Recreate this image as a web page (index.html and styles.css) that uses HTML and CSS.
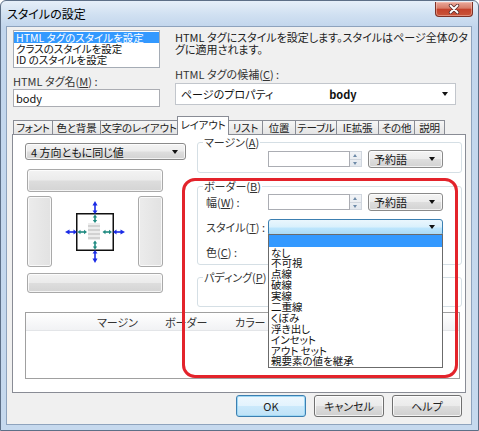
FILE: index.html
```html
<!DOCTYPE html>
<html lang="ja">
<head>
<meta charset="utf-8">
<title>スタイルの設定</title>
<link rel="stylesheet" href="styles.css">
</head>
<body>
<div class="window">
  <div class="titlebar">
    <span class="title">スタイルの設定</span>
    <div class="close">
      <svg width="12" height="10" viewBox="0 0 12 10"><path d="M2.5 1.5 L9.5 8.5 M9.5 1.5 L2.5 8.5" stroke="#5a3030" stroke-width="3.4" stroke-linecap="round"/><path d="M2.5 1.5 L9.5 8.5 M9.5 1.5 L2.5 8.5" stroke="#fff" stroke-width="1.8" stroke-linecap="round"/></svg>
    </div>
  </div>

  <div class="client">
    <div class="top">
      <div class="top-left">
        <div class="listbox">
          <div class="item selected">HTML タグのスタイルを設定</div>
          <div class="item">クラスのスタイルを設定</div>
          <div class="item">ID のスタイルを設定</div>
        </div>
        <div class="label tagname-label">HTML タグ名(<u>M</u>) :</div>
        <div class="textbox tagname-box">body</div>
      </div>
      <div class="top-right">
        <p class="desc">HTML タグにスタイルを設定します。スタイルはページ全体のタ<br>グに適用されます。</p>
        <div class="label cand-label">HTML タグの候補(<u>C</u>) :</div>
        <div class="combo combo-white cand-combo">
          <span class="combo-text">ページのプロパティ</span>
          <b class="combo-bold">body</b>
          <span class="arrow"></span>
        </div>
      </div>
    </div>

    <div class="tabs">
      <div class="tab t-font">フォント</div>
      <div class="tab t-color">色と背景</div>
      <div class="tab t-text">文字のレイアウト</div>
      <div class="tab t-layout active">レイアウト</div>
      <div class="tab t-list">リスト</div>
      <div class="tab t-pos">位置</div>
      <div class="tab t-table">テーブル</div>
      <div class="tab t-ie">IE拡張</div>
      <div class="tab t-other">その他</div>
      <div class="tab t-desc">説明</div>
    </div>

    <div class="panel">
      <div class="panel-grid">
        <div class="left-col">
          <div class="combo combo-btn side-combo">
            <span class="combo-text">4 方向ともに同じ値</span>
            <span class="arrow"></span>
          </div>
          <div class="box-editor">
            <div class="bar bar-top"></div>
            <div class="bar bar-left"></div>
            <div class="diagram">
              <svg width="86" height="71" viewBox="0 0 86 71">
                <rect x="36" y="27" width="12" height="17" fill="#ededed"/>
                <g fill="#d2d2d2">
                  <rect x="36" y="29" width="12" height="2"/>
                  <rect x="36" y="33" width="12" height="2"/>
                  <rect x="36" y="37" width="12" height="2"/>
                  <rect x="36" y="41" width="12" height="2"/>
                </g>
                <rect x="24.75" y="17.75" width="36.5" height="36.5" fill="none" stroke="#111" stroke-width="1.5"/>
                <g stroke="#1a2be6" stroke-width="1.6" fill="#1a2be6">
                  <line x1="43" y1="8" x2="43" y2="16"/>
                  <polygon points="40.5,9.5 43,5 45.5,9.5" stroke="none"/>
                  <polygon points="40.5,14.5 43,18 45.5,14.5" stroke="none"/>
                  <line x1="43" y1="56" x2="43" y2="64"/>
                  <polygon points="40.5,57.5 43,54 45.5,57.5" stroke="none"/>
                  <polygon points="40.5,62.5 43,67 45.5,62.5" stroke="none"/>
                  <line x1="16" y1="36" x2="23" y2="36"/>
                  <polygon points="17.5,33.5 13,36 17.5,38.5" stroke="none"/>
                  <polygon points="21.5,33.5 25,36 21.5,38.5" stroke="none"/>
                  <line x1="63" y1="36" x2="70" y2="36"/>
                  <polygon points="64.5,33.5 61,36 64.5,38.5" stroke="none"/>
                  <polygon points="68.5,33.5 73,36 68.5,38.5" stroke="none"/>
                </g>
                <g stroke="#1f8a80" stroke-width="1.6" fill="#1f8a80">
                  <line x1="43" y1="20" x2="43" y2="25"/>
                  <polygon points="40.8,21.5 43,18.5 45.2,21.5" stroke="none"/>
                  <polygon points="40.8,24 43,27 45.2,24" stroke="none"/>
                  <line x1="43" y1="46" x2="43" y2="52"/>
                  <polygon points="40.8,47.5 43,44.5 45.2,47.5" stroke="none"/>
                  <polygon points="40.8,50.5 43,53.5 45.2,50.5" stroke="none"/>
                  <line x1="27" y1="36" x2="33" y2="36"/>
                  <polygon points="28.5,33.8 25.5,36 28.5,38.2" stroke="none"/>
                  <polygon points="32,33.8 35,36 32,38.2" stroke="none"/>
                  <line x1="52" y1="36" x2="58" y2="36"/>
                  <polygon points="53.5,33.8 50.5,36 53.5,38.2" stroke="none"/>
                  <polygon points="57,33.8 60,36 57,38.2" stroke="none"/>
                </g>
              </svg>
            </div>
            <div class="bar bar-right"></div>
            <div class="bar bar-bottom"></div>
          </div>
        </div>

        <div class="right-col">
          <fieldset class="group group-margin">
            <legend>マージン(<u>A</u>)</legend>
            <div class="row">
              <span class="row-label"></span>
              <div class="spin-field">
                <div class="textbox num-box"></div>
                <div class="spin"><span class="spin-up"></span><span class="spin-down"></span></div>
              </div>
              <div class="combo combo-btn kw-combo"><span class="combo-text">予約語</span><span class="arrow"></span></div>
            </div>
          </fieldset>

          <fieldset class="group group-border">
            <legend>ボーダー(<u>B</u>)</legend>
            <div class="row">
              <span class="row-label">幅(<u>W</u>) :</span>
              <div class="spin-field">
                <div class="textbox num-box"></div>
                <div class="spin"><span class="spin-up"></span><span class="spin-down"></span></div>
              </div>
              <div class="combo combo-btn kw-combo"><span class="combo-text">予約語</span><span class="arrow"></span></div>
            </div>
            <div class="row">
              <span class="row-label">スタイル(<u>T</u>) :</span>
              <div class="style-wrap">
                <div class="combo combo-focus style-combo"><span class="combo-text"></span><span class="arrow"></span></div>
                <ul class="droplist">
                  <li class="hl">&nbsp;</li>
                  <li>なし</li>
                  <li>不可視</li>
                  <li>点線</li>
                  <li>破線</li>
                  <li>実線</li>
                  <li>二重線</li>
                  <li>くぼみ</li>
                  <li>浮き出し</li>
                  <li>インセット</li>
                  <li>アウト セット</li>
                  <li>親要素の値を継承</li>
                </ul>
              </div>
            </div>
            <div class="row">
              <span class="row-label">色(<u>C</u>) :</span>
            </div>
          </fieldset>

          <fieldset class="group group-padding">
            <legend>パディング(<u>P</u>)</legend>
          </fieldset>
        </div>
      </div>

      <div class="listview">
        <div class="lv-header">
          <span class="lv-col lv-c0"></span>
          <span class="lv-col lv-c1">マージン</span>
          <span class="lv-col lv-c2">ボーダー</span>
          <span class="lv-col lv-c3">カラー</span>
        </div>
      </div>

      <div class="highlight"></div>
    </div>

    <div class="buttons">
      <div class="btn btn-default">OK</div>
      <div class="btn btn-cancel">キャンセル</div>
      <div class="btn btn-help">ヘルプ</div>
    </div>
  </div>
</div>
</body>
</html>
```

FILE: styles.css
```css
* { box-sizing: border-box; }

html, body {
  margin: 0;
  padding: 0;
}

body {
  width: 479px;
  height: 431px;
  overflow: hidden;
  background: #fff;
  font-family: "Noto Sans CJK JP", "Noto Sans", sans-serif;
  font-size: 11px;
  line-height: 12px;
  font-feature-settings: "palt" 1;
  color: #111;
}

u { text-decoration: underline; text-underline-offset: 1px; }

/* ---------- window frame ---------- */
.window {
  width: 479px;
  height: 431px;
  display: flex;
  flex-direction: column;
  border: 1px solid #5d6f87;
  border-radius: 6px 6px 0 0;
  background: linear-gradient(#e6eff9 0, #d0e0f1 14px, #c2d6ed 26px, #c6d9ee 100%);
}

.titlebar {
  height: 25px;
  flex: none;
  display: flex;
  justify-content: space-between;
  align-items: flex-start;
  padding: 0 5px 0 6px;
}

.title {
  font-size: 12px;
  line-height: 12px;
  margin-top: 7px;
  color: #000;
}

.close {
  width: 38px;
  height: 15px;
  margin-top: 1px;
  display: flex;
  align-items: center;
  justify-content: center;
  border: 1px solid #7d3126;
  border-top: none;
  border-radius: 0 0 4px 4px;
  background: linear-gradient(#e9a99b 0, #d77b68 45%, #c4412b 50%, #c9553a 100%);
  box-shadow: inset 0 0 0 1px rgba(255, 210, 200, 0.45);
}

.client {
  flex: 1;
  margin: 0 6px 5px 5px;
  border: 1px solid #8ea3bd;
  background: #f0f0f0;
  padding: 3px 5px 0 5px;
  display: flex;
  flex-direction: column;
}

/* ---------- top section ---------- */
.top {
  margin-left: 1px;
  display: grid;
  grid-template-columns: 147px 281px;
  column-gap: 15px;
}

.listbox {
  height: 38px;
  border: 1px solid #a5acb5;
  background: #fff;
  padding: 1px 0 0 0;
}

.item {
  height: 11px;
  line-height: 11px;
  font-size: 10.5px;
  padding-left: 2px;
  white-space: nowrap;
  color: #111;
}

.item.selected {
  background: #3399ff;
  color: #fff;
}

.label {
  color: #333;
  white-space: nowrap;
}

.tagname-label {
  margin-top: 7px;
}

.textbox {
  background: #fff;
  border: 1px solid #abadb3;
}

.tagname-box {
  margin-top: 2px;
  height: 18px;
  line-height: 16px;
  padding-left: 2px;
}

.top-right {
  padding-top: 1px;
}

.desc {
  margin: 0;
  line-height: 12px;
  color: #222;
  white-space: nowrap;
}

.cand-label {
  margin-top: 13px;
}

/* ---------- combos ---------- */
.combo {
  position: relative;
  display: flex;
  align-items: center;
  padding-left: 5px;
  white-space: nowrap;
}

.combo .arrow {
  position: absolute;
  right: 7px;
  top: 50%;
  margin-top: -2px;
  width: 0;
  height: 0;
  border-left: 3.5px solid transparent;
  border-right: 3.5px solid transparent;
  border-top: 4px solid #111;
}

.combo-white {
  background: #fff;
  border: 1px solid #c2c6cc;
}

.cand-combo {
  margin-top: 3px;
  height: 22px;
}

.combo-bold {
  margin-left: 56px;
  font-weight: bold;
}

.combo-btn {
  border: 1px solid #8a8a8a;
  border-radius: 3px;
  background: linear-gradient(#f4f4f4 0, #ececec 48%, #dedede 52%, #d2d2d2 100%);
  box-shadow: inset 0 0 0 1px rgba(255, 255, 255, 0.7);
}

.combo-focus {
  border: 1px solid #3c7fb1;
  border-radius: 3px;
  background: linear-gradient(#eaf6fd 0, #d9f0fc 48%, #bee6fd 52%, #a7d9f5 100%);
}

/* ---------- tabs ---------- */
.tabs {
  margin-top: 9px;
  padding-left: 1px;
  height: 18px;
  display: flex;
  align-items: flex-end;
  position: relative;
  z-index: 1;
}

.tab {
  flex: none;
  height: 14px;
  line-height: 13px;
  padding: 0;
  text-align: center;
  font-size: 10.5px;
  letter-spacing: -0.2px;
  border: 1px solid #898c95;
  border-bottom: none;
  border-right: none;
  background: linear-gradient(#f6f6f6, #e4e4e4);
  color: #222;
  white-space: nowrap;
}

.t-font  { width: 39px; }
.t-color { width: 48px; }
.t-text  { width: 77px; }
.t-layout { width: 52px; }
.t-list  { width: 33px; }
.t-pos   { width: 33px; }
.t-table { width: 41px; }
.t-ie    { width: 42px; }
.t-other { width: 36px; }
.t-desc  { width: 31px; border-right: 1px solid #898c95; }

.tab.active {
  height: 19px;
  margin-bottom: -1px;
  line-height: 16px;
  background: #fff;
  border-right: 1px solid #898c95;
}

.tab.active + .tab { border-left: none; }

/* ---------- panel ---------- */
.panel {
  position: relative;
  height: 259px;
  flex: none;
  background: #fff;
  border: 1px solid #898c95;
  padding: 8px 5px 0 12px;
}

.panel-grid {
  display: grid;
  grid-template-columns: 161px 265px;
  column-gap: 11px;
}

.side-combo {
  height: 17px;
}

.box-editor {
  margin: 9px 0 0 2px;
  width: 136px;
  display: grid;
  grid-template-columns: 25px 86px 25px;
  grid-template-rows: 23px 71px 22px;
  row-gap: 4px;
}

.bar {
  border: 1px solid #a9a9a9;
  border-radius: 3px;
  background: linear-gradient(#f3f3f3 0, #ebebeb 48%, #dddddd 52%, #d4d4d4 100%);
  box-shadow: inset 0 0 0 1px rgba(255, 255, 255, 0.75);
}

.bar-top { grid-column: 1 / 4; }
.bar-left, .bar-right {
  background: linear-gradient(90deg, #ececec, #e2e2e2);
}
.bar-bottom { grid-column: 1 / 4; margin-top: 2px; }

.diagram {
  display: flex;
  align-items: center;
  justify-content: center;
}

.diagram svg { display: block; }

/* ---------- group boxes ---------- */
.group {
  margin: 0;
  border: 1px solid #d5dfe5;
  border-radius: 3px;
  padding: 2px 8px 4px 8px;
  min-width: 0;
}

.group legend {
  padding: 0 1px;
  margin-left: -3px;
  line-height: 12px;
  color: #333;
}

.group-margin { margin-top: -7px; }
.group-border { margin-top: 7px; padding-top: 1px; padding-bottom: 3px; }
.group-padding { margin-top: 6px; height: 36px; }

.row {
  display: flex;
  align-items: center;
  height: 18px;
}

.row + .row { margin-top: 7px; }

.row-label {
  width: 62px;
  flex: none;
  color: #333;
  white-space: nowrap;
}

.spin-field {
  display: flex;
  height: 16px;
}

.num-box {
  width: 82px;
  height: 16px;
}

.spin {
  width: 12px;
  height: 16px;
  display: flex;
  flex-direction: column;
  background: linear-gradient(#f2f4f7, #e3e8ee);
  border: 1px solid #d0d6de;
  border-left: none;
}

.spin-up, .spin-down {
  flex: 1;
  position: relative;
}

.spin-up::after, .spin-down::after {
  content: "";
  position: absolute;
  left: 3px;
  top: 2px;
  border-left: 2.5px solid transparent;
  border-right: 2.5px solid transparent;
}

.spin-up::after { border-bottom: 3px solid #6d8aa8; }
.spin-down::after { border-top: 3px solid #6d8aa8; top: 2px; }
.spin-down { border-top: 1px solid #d0d6de; }

.kw-combo {
  margin-left: 6px;
  width: 75px;
  height: 18px;
}

.style-wrap {
  position: relative;
  width: 175px;
}

.style-combo {
  height: 17px;
}

.droplist {
  position: absolute;
  left: 0;
  top: 15px;
  width: 175px;
  margin: 0;
  padding: 0 0 1px 0;
  list-style: none;
  background: #fff;
  border: 1px solid #6b6b6b;
  z-index: 5;
}

.droplist li {
  height: 10.9px;
  line-height: 11px;
  font-size: 10.5px;
  padding-left: 2px;
  color: #111;
  white-space: nowrap;
}

.droplist li.hl {
  height: 12px;
  background: #3399ff;
}

/* ---------- list view ---------- */
.listview {
  margin-top: 5px;
  width: 435px;
  height: 67px;
  border: 1px solid #a0a0a0;
  background: #fff;
}

.lv-header {
  display: flex;
  height: 18px;
  align-items: center;
  background: linear-gradient(#ffffff, #f1f2f4);
  border-bottom: 1px solid #e3e5e8;
  color: #333;
}

.lv-col { white-space: nowrap; }
.lv-c0 { width: 71px; }
.lv-c1 { width: 68px; }
.lv-c2 { width: 70px; }

/* ---------- red annotation ---------- */
.highlight {
  position: absolute;
  left: 169px;
  top: 43px;
  width: 276px;
  height: 200px;
  border: 3px solid #e3232b;
  border-radius: 13px;
  pointer-events: none;
  z-index: 6;
}

/* ---------- buttons ---------- */
.buttons {
  margin-top: 2px;
  display: flex;
  justify-content: flex-end;
  gap: 8px;
  padding-right: 4px;
}

.btn {
  width: 70px;
  height: 22px;
  line-height: 20px;
  text-align: center;
  border: 1px solid #707070;
  border-radius: 3px;
  background: linear-gradient(#f2f2f2 0, #ebebeb 48%, #dddddd 52%, #cfcfcf 100%);
  box-shadow: inset 0 0 0 1px rgba(255, 255, 255, 0.75);
  color: #222;
}

.btn-default {
  border-color: #3c7fb1;
  box-shadow: inset 0 0 0 1px #9fd8f5;
  background: linear-gradient(#eef8fe 0, #e3f3fd 48%, #cbe9fb 52%, #bfe2f7 100%);
}
```
